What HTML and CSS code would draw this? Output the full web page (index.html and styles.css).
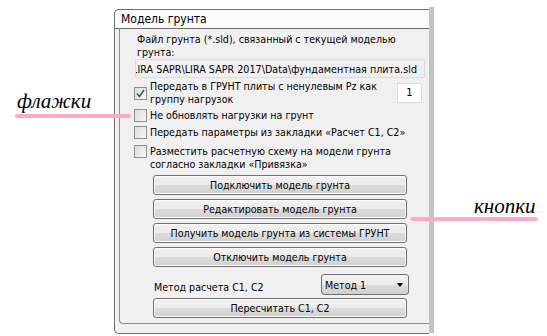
FILE: index.html
```html
<!DOCTYPE html>
<html lang="ru">
<head>
<meta charset="utf-8">
<title>Модель грунта</title>
<link rel="stylesheet" href="styles.css">
</head>
<body>
<div class="stage">
  <div class="window">
    <div class="panel">
      <div class="panel-title">Модель грунта</div>
      <div class="group">
        <div class="file-label">Файл грунта (*.sld), связанный с текущей моделью грунта:</div>
        <div class="file-field"><span>C:\Program Files\LIRA SAPR\LIRA SAPR 2017\Data\фундаментная плита.sld</span></div>

        <div class="check-row row-1">
          <span class="cb checked"><svg viewBox="0 0 9 9" width="9" height="9"><path d="M1 4.5 L3.5 7.5 L8 1" fill="none" stroke="#3a4f8f" stroke-width="1.6"/></svg></span>
          <span class="cb-text">Передать в ГРУНТ плиты с ненулевым Pz как группу нагрузок</span>
          <span class="num-field">1</span>
        </div>
        <div class="check-row row-2">
          <span class="cb"></span>
          <span class="cb-text">Не обновлять нагрузки на грунт</span>
        </div>
        <div class="check-row row-3">
          <span class="cb"></span>
          <span class="cb-text">Передать параметры из закладки «Расчет С1, С2»</span>
        </div>
        <div class="check-row row-4">
          <span class="cb"></span>
          <span class="cb-text">Разместить расчетную схему на модели грунта согласно закладки «Привязка»</span>
        </div>

        <div class="buttons">
          <div class="btn">Подключить модель грунта</div>
          <div class="btn">Редактировать модель грунта</div>
          <div class="btn">Получить модель грунта из системы ГРУНТ</div>
          <div class="btn">Отключить модель грунта</div>
        </div>

        <div class="method-row">
          <span class="method-label">Метод расчета С1, С2</span>
          <div class="select"><span>Метод 1</span><span class="arrow"></span></div>
        </div>
        <div class="btn btn-last">Пересчитать С1, С2</div>
      </div>
    </div>
    <div class="edge"></div>
  </div>

  <div class="note note-flags">флажки</div>
  <div class="mark mark-flags"></div>
  <div class="note note-buttons">кнопки</div>
  <div class="mark mark-buttons"></div>
</div>
</body>
</html>
```

FILE: styles.css
```css
html, body {
  margin: 0;
  padding: 0;
  background: #ffffff;
}
.stage {
  position: relative;
  width: 547px;
  height: 336px;
  overflow: hidden;
  font-family: "DejaVu Sans", sans-serif;
  font-stretch: condensed;
  font-size: 10.6px;
  color: #000;
}
.window {
  display: flex;
  padding: 7px 0 0 114px;
}
.panel {
  width: 314px;
  height: 323px;
  margin-top: 2px;
  border: 1px solid #6e6e6e;
  border-right: none;
  border-radius: 5px 0 0 5px;
  background: #f0f0f0;
  display: flex;
  flex-direction: column;
}
.panel-title {
  height: 18px;
  line-height: 18px;
  padding-left: 6px;
  background: #fbfbfb;
  border-bottom: 1px solid #6a6a6a;
  border-top-left-radius: 5px;
  font-size: 12px;
}
.edge {
  width: 5px;
  height: 326px;
  background: #c3c3c3;
}
.group {
  margin: 0 0 9px 4px;
  border-left: 1px solid #8e8e8e;
  border-bottom: 1px solid #8e8e8e;
  border-bottom-left-radius: 4px;
  flex: 1;
  padding: 4px 0 0 0;
  display: flex;
  flex-direction: column;
}
.file-label {
  padding-left: 17px;
  width: 275px;
  line-height: 13px;
}
.file-field {
  margin: 0 0 0 15px;
  width: 281px;
  height: 17px;
  border: 1px solid #dcdcdc;
  background: #f0f0f0;
  overflow: hidden;
  display: flex;
  justify-content: flex-end;
  align-items: center;
  white-space: nowrap;
  padding-right: 7px;
  box-sizing: content-box;
}
.file-field span {
  flex: none;
  letter-spacing: 0.05px;
}
.check-row {
  display: flex;
  padding-left: 14px;
  line-height: 13px;
}
.cb {
  flex: none;
  width: 11px;
  height: 11px;
  border: 1px solid #8f8f8f;
  background: linear-gradient(135deg, #dcdcdc, #f6f6f6);
  display: flex;
  align-items: center;
  justify-content: center;
  margin-right: 3px;
}
.cb-text {
  display: block;
}
.row-1 {
  margin-top: 2px;
  align-items: center;
}
.row-1 .cb-text {
  width: 240px;
}
.num-field {
  margin-left: 7px;
  width: 23px;
  height: 18px;
  border: 1px solid #dcdcdc;
  background: #fff;
  line-height: 18px;
  text-align: center;
  font-size: 11px;
}
.row-2 {
  margin-top: 3px;
  align-items: center;
}
.row-3 {
  margin-top: 4px;
  align-items: center;
}
.row-4 {
  margin-top: 6px;
  align-items: flex-start;
}
.row-4 .cb-text {
  width: 250px;
}
.buttons {
  display: flex;
  flex-direction: column;
  gap: 4px;
  margin-top: 4px;
}
.btn {
  margin-left: 33px;
  width: 252px;
  height: 18px;
  border: 1px solid #707070;
  border-radius: 3px;
  background: linear-gradient(#f2f2f2 0%, #ebebeb 50%, #dddddd 51%, #cfcfcf 100%);
  text-align: center;
  line-height: 18px;
  box-shadow: inset 0 0 0 1px #fcfcfc;
}
.method-row {
  display: flex;
  align-items: center;
  margin: 7px 0 0 34px;
  width: 255px;
}
.method-label {
  flex: 1;
  padding-top: 4px;
}
.select {
  height: 19px;
  border: 1px solid #707070;
  border-radius: 3px;
  background: linear-gradient(#f2f2f2 0%, #ebebeb 50%, #dddddd 51%, #cfcfcf 100%);
  display: flex;
  align-items: center;
  justify-content: space-between;
  padding: 0 5px 0 3px;
  box-sizing: content-box;
  width: 78px;
}
.arrow {
  width: 0;
  height: 0;
  border-left: 3.5px solid transparent;
  border-right: 3.5px solid transparent;
  border-top: 4px solid #000;
}
.btn-last {
  margin-top: 3px;
}

.note {
  position: absolute;
  font-family: "Liberation Serif", serif;
  font-style: italic;
  font-size: 21px;
  color: #000;
  font-stretch: normal;
}
.note-flags {
  left: 17px;
  top: 89px;
}
.note-buttons {
  left: 474px;
  top: 194px;
}
.mark {
  position: absolute;
  height: 4px;
  border-radius: 2px;
  background: #fbabc8;
}
.mark-flags {
  left: 15px;
  top: 114px;
  width: 116px;
}
.mark-buttons {
  left: 410px;
  top: 217px;
  width: 128px;
}
```
